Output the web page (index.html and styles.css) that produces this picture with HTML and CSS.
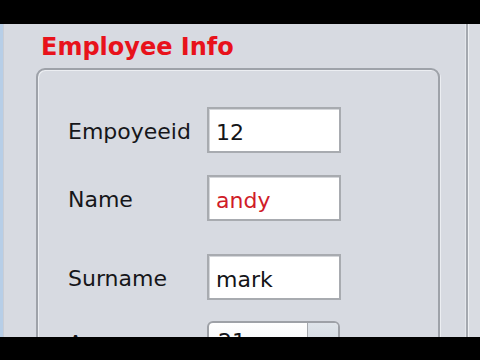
FILE: index.html
```html
<!DOCTYPE html>
<html>
<head>
<meta charset="utf-8">
<link rel="stylesheet" href="styles.css">
</head>
<body>
<div class="screen">
  <div class="bar"></div>
  <div class="app">
    <div class="edge"></div>
    <div class="panel">
      <div class="title">Employee Info</div>
      <div class="group">
        <div class="row">
          <div class="label">Empoyeeid</div>
          <div class="field">12</div>
        </div>
        <div class="row row-2">
          <div class="label">Name</div>
          <div class="field field-red">andy</div>
        </div>
        <div class="row row-3">
          <div class="label">Surname</div>
          <div class="field">mark</div>
        </div>
        <div class="row row-4">
          <div class="label label-top">Age</div>
          <div class="combo">
            <div class="combo-text">21</div>
            <div class="combo-btn"></div>
          </div>
        </div>
      </div>
    </div>
    <div class="divider"></div>
    <div class="side"></div>
  </div>
  <div class="bar bar-bottom"></div>
</div>
</body>
</html>
```
FILE: styles.css
```css
html, body {
  margin: 0;
  padding: 0;
  background: #000;
}
body {
  width: 480px;
  height: 360px;
  overflow: hidden;
  font-family: "DejaVu Sans", "Liberation Sans", sans-serif;
}
.screen {
  display: flex;
  flex-direction: column;
  width: 480px;
  height: 360px;
}
.bar {
  height: 24px;
  background: #000;
  flex: none;
}
.bar-bottom {
  height: 23px;
}
.app {
  height: 313px;
  flex: none;
  display: flex;
  overflow: hidden;
  background: #d7dae1;
}
.edge {
  width: 3px;
  background: #b7cee7;
  border-right: 1px solid #c9cdd5;
  flex: none;
}
.panel {
  width: 461px;
  flex: none;
  padding-top: 10px;
  box-sizing: border-box;
}
.title {
  padding-left: 37px;
  font-weight: bold;
  font-size: 24px;
  line-height: 26px;
  color: #e8121b;
}
.group {
  margin-top: 8px;
  margin-left: 32px;
  width: 404px;
  height: 400px;
  box-sizing: border-box;
  border: 2px solid #9ea2a9;
  border-radius: 9px;
  box-shadow: inset 1px 1px 0 #eceef2, 1px 1px 0 #eceef2;
  padding: 37px 0 0 30px;
}
.row {
  display: flex;
  align-items: center;
  height: 46px;
}
.row-2 { margin-top: 22px; }
.row-3 { margin-top: 33px; }
.row-4 { margin-top: 21px; }
.label {
  width: 139px;
  flex: none;
  font-size: 22px;
  line-height: 26px;
  padding-top: 4px;
  color: #16161a;
}
.label-top {
  align-self: flex-start;
  padding-top: 0;
  margin-top: 10px;
}
.field {
  width: 134px;
  height: 46px;
  box-sizing: border-box;
  background: #fff;
  border: 2px solid #a8abb0;
  box-shadow: inset 1px 1px 0 #d4d6da;
  padding: 11px 7px 5px;
  font-size: 22px;
  line-height: 26px;
  color: #141418;
}
.field-red {
  color: #d01c28;
}
.combo {
  width: 133px;
  height: 46px;
  box-sizing: border-box;
  align-self: flex-start;
  display: flex;
  border: 2px solid #9ea1a7;
  border-radius: 6px;
  overflow: hidden;
  background: linear-gradient(#ffffff, #eceef1);
}
.combo-text {
  flex: 1;
  padding: 6px 9px 0;
  font-size: 22px;
  line-height: 26px;
  color: #141418;
}
.combo-btn {
  width: 30px;
  flex: none;
  border-left: 1px solid #a6a9ae;
  background: linear-gradient(#dfe4ea, #c9d0d9);
}
.divider {
  width: 1px;
  flex: none;
  background: #e4e7ec;
  border-right: 2px solid #a4a8af;
}
.side {
  flex: 1;
  border-left: 1px solid #eef0f3;
  background: #d9dce2;
}
```
